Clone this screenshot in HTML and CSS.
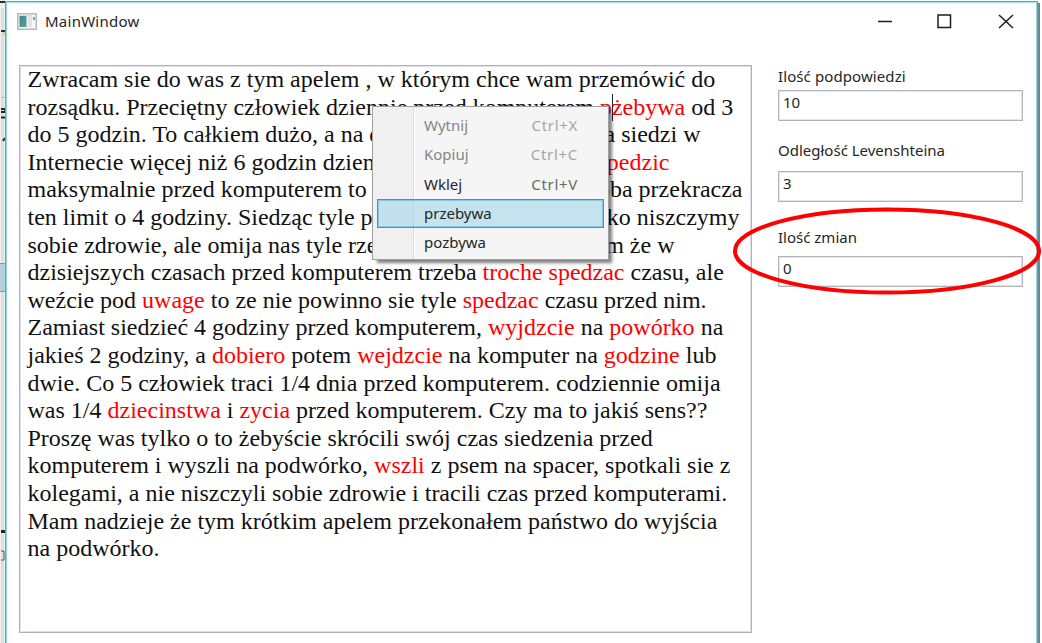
FILE: index.html
```html
<!DOCTYPE html>
<html lang="pl">
<head>
<meta charset="utf-8">
<title>MainWindow</title>
<link rel="stylesheet" href="styles.css">
</head>
<body>
<div class="desktop">
  <svg class="backdrop" width="5" height="643" viewBox="0 0 5 643">
    <rect width="6" height="643" fill="#f0f0f0"/>
    <path d="M2.500 8V643" stroke="#dedede" stroke-width="3"/>
    <path d="M0 2h6M1 31h5" stroke="#282d32" stroke-width="2"/>
    <path d="M3 33.500h2" stroke="#d8d526" stroke-width="2"/>
    <path d="M1 97.500h5" stroke="#b0b4bb"/>
    <path d="M1 109h3q2 0 1 3H1M1 117.500h4M3 141l2-3" stroke="#22272c" stroke-width="2" fill="none"/>
    <rect y="263" width="6" height="29" fill="#b7cfdd"/>
    <path d="M0 263.500h6M0 291.500h6" stroke="#62a6c4"/>
    <path d="M1 531.500h4" stroke="#20252a" stroke-width="3"/>
    <path d="M1 551h3v9H1" stroke="#55504a" fill="none"/>
  </svg>
  <main class="window">
    <header class="titlebar">
      <svg class="app-icon" width="20" height="17" viewBox="0 0 20 17">
        <defs><linearGradient id="pane" x1="0" x2="1" y2="1"><stop stop-color="#477fa9"/><stop offset="1" stop-color="#55a976"/></linearGradient></defs>
        <rect x=".75" y=".75" width="18.500" height="15.500" fill="#f6f6f6" stroke="#b4babf" stroke-width="1.500"/>
        <path d="M2 2.500h13" stroke="#d8dde1"/>
        <rect x="2.500" y="3" width="7" height="11" fill="url(#pane)"/>
        <rect x="10.500" y="3" width="4.500" height="11" fill="#e4e4e8"/>
        <path d="M16 4h2v3h-2z" fill="#69b48e"/>
      </svg>
      <h1 class="title">MainWindow</h1>
      <svg class="controls" width="140" height="20" viewBox="0 0 140 20" fill="none" stroke="#1c1c1c" stroke-width="1.500">
        <path d="M1 10.500h14"/>
        <rect x="61" y="4" width="12.500" height="12.500"/>
        <path d="M122 4l14 13M136 4l-14 13"/>
      </svg>
    </header>
    <div class="content">
      <section class="editor">
        <p class="line">Zwracam sie do was z tym apelem , w którym chce wam przemówić do</p>
        <p class="line">rozsądku. Przeciętny człowiek dziennie przed komputerem <em>p<i class="caret"></i>żebywa</em> od 3</p>
        <p class="line split w673"><span>do 5 godzin. To całkiem dużo, a na do</span><span>a siedzi w</span></p>
        <p class="line split w642"><span>Internecie więcej niż 6 godzin dzienn</span><em>spedzic</em></p>
        <p class="line split w715"><span>maksymalnie przed komputerem to</span><span>oba przekracza</span></p>
        <p class="line split w712"><span>ten limit o 4 godziny. Siedząc tyle pr</span><span>tylko niszczymy</span></p>
        <p class="line split w647"><span>sobie zdrowie, ale omija nas tyle rzec</span><span>m że w</span></p>
        <p class="line">dzisiejszych czasach przed komputerem trzeba <em>troche spedzac</em> czasu, ale</p>
        <p class="line">weźcie pod <em>uwage</em> to ze nie powinno sie tyle <em>spedzac</em> czasu przed nim.</p>
        <p class="line">Zamiast siedzieć 4 godziny przed komputerem, <em>wyjdzcie</em> na <em>powórko</em> na</p>
        <p class="line">jakieś 2 godziny, a <em>dobiero</em> potem <em>wejdzcie</em> na komputer na <em>godzine</em> lub</p>
        <p class="line">dwie. Co 5 człowiek traci 1/4 dnia przed komputerem. codziennie omija</p>
        <p class="line">was 1/4 <em>dziecinstwa</em> i <em>zycia</em> przed komputerem. Czy ma to jakiś sens??</p>
        <p class="line">Proszę was tylko o to żebyście skrócili swój czas siedzenia przed</p>
        <p class="line">komputerem i wyszli na podwórko, <em>wszli</em> z psem na spacer, spotkali sie z</p>
        <p class="line">kolegami, a nie niszczyli sobie zdrowie i tracili czas przed komputerami.</p>
        <p class="line">Mam nadzieje że tym krótkim apelem przekonałem państwo do wyjścia</p>
        <p class="line">na podwórko.</p>
      </section>
      <aside class="settings">
        <div class="label first">Ilość podpowiedzi</div>
        <div class="field">10</div>
        <div class="label second">Odległość Levenshteina</div>
        <div class="field">3</div>
        <div class="label third">Ilość zmian</div>
        <div class="field">0</div>
      </aside>
    </div>
  </main>
  <div class="edge"></div>
  <div class="menu">
    <div class="item disabled"><span>Wytnij</span><span class="key">Ctrl+X</span></div>
    <div class="item disabled"><span>Kopiuj</span><span class="key">Ctrl+C</span></div>
    <div class="item"><span>Wklej</span><span class="key">Ctrl+V</span></div>
    <div class="item active"><span>przebywa</span></div>
    <div class="item"><span>pozbywa</span></div>
  </div>
  <svg class="highlight" width="312" height="92" viewBox="0 0 312 92">
    <ellipse cx="156" cy="46" rx="152" ry="41.500" fill="none" stroke="#fe0000" stroke-width="4"/>
  </svg>
</div>
</body>
</html>
```
FILE: styles.css
```css
* { box-sizing: border-box; }
body { margin: 0; background: #fff; font-family: "Noto Sans", "Open Sans", sans-serif; font-size: 15px; color: #262626; overflow: hidden; }
.desktop { position: relative; display: flex; width: 1042px; height: 643px; }
.backdrop { flex: none; width: 5px; }
.window { flex: none; width: 1033px; height: 642px; margin-top: 1px; border: 1px solid #35bac5; border-bottom: 0; background: #fff; box-shadow: inset 1px 0 #8ed9df, inset 0 1px #a5e1e6, inset -1px 0 #8ed9df; }
.edge { width: 2px; margin-top: 3px; background: #6b8790; }
.titlebar { display: flex; align-items: center; height: 38px; padding-left: 11px; }
.title { margin: 0 auto 0 8px; font-size: 15px; font-weight: 400; line-height: 20px; letter-spacing: .25px; }
.controls { margin: -1px 20px 0 0; }
.content { display: flex; padding: 25px 14px 0 13px; }
.editor { flex: none; width: 733px; height: 568px; border: 1px solid #b0b1ba; box-shadow: inset 0 0 0 1px #e0e0e6; padding: 0 0 0 7.5px; color: #111; font: 24px/27.6px "Liberation Serif", serif; }
.line { margin: 0; height: 27.6px; white-space: nowrap; }
.line em { color: #fe0000; font-style: normal; }
.split { display: flex; justify-content: space-between; }
.w673 { width: 673px; }
.w642 { width: 642px; }
.w715 { width: 715px; }
.w712 { width: 712px; }
.w647 { width: 647px; }
.caret { display: inline-block; width: 1px; height: 27px; margin-right: -1px; vertical-align: -6px; background: #222; }
.settings { width: 246px; margin-left: 26px; }
.label { line-height: 20px; white-space: nowrap; }
.first { margin: 1px 0 4px; letter-spacing: .1px; }
.second { margin: 19px 0 11px; }
.third { margin: 25px 0 9px; }
.field { height: 31px; border: 1px solid #b2b4bd; box-shadow: inset 0 0 0 1px #e4e5e9; padding: 2px 4px; line-height: 19px; }
.menu { position: absolute; left: 372px; top: 106px; width: 237px; height: 154px; border: 1px solid #a0a0a0; padding: 4px; background: linear-gradient(90deg, #f0f0f0 40px, #dadada 40px, #dadada 41px, #fff 41px, #fff 42px, #f5f5f5 42px); box-shadow: 4px 4px 3px -1px rgba(0,0,0,.5); }
.item { display: flex; justify-content: space-between; height: 29.3px; padding: 0 26px 0 47px; line-height: 29px; }
.disabled { color: #858585; }
.key { color: #686868; letter-spacing: .7px; }
.disabled .key { color: #a5a5a5; }
.active { padding-left: 46px; border: 1px solid #26a0da; box-shadow: inset 0 0 0 1px rgba(38,160,218,.4); background: rgba(151,210,234,.52); line-height: 26px; }
.highlight { position: absolute; left: 731px; top: 205px; }
```
